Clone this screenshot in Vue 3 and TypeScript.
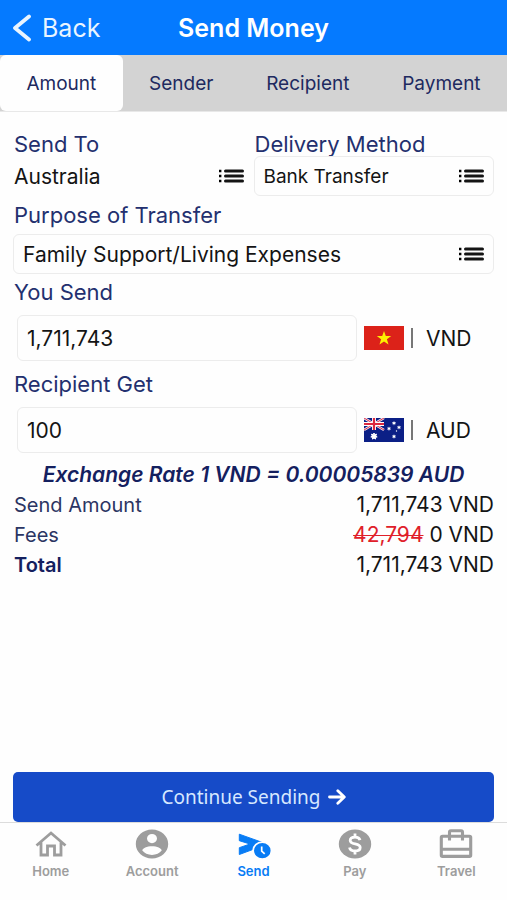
<script setup lang="ts">
import { ref } from 'vue'

interface SummaryRow {
  label: string
  amount: string
  struck?: string
  strong?: boolean
}

const tabs: string[] = ['Amount', 'Sender', 'Recipient', 'Payment']
const activeTab = ref('Amount')

const country = ref('Australia')
const delivery = ref('Bank Transfer')
const purpose = ref('Family Support/Living Expenses')
const sendAmount = ref('1,711,743')
const receiveAmount = ref('100')

const summary: SummaryRow[] = [
  { label: 'Send Amount', amount: '1,711,743 VND' },
  { label: 'Fees', amount: '0 VND', struck: '42,794' },
  { label: 'Total', amount: '1,711,743 VND', strong: true },
]

const navItems: string[] = ['Home', 'Account', 'Send', 'Pay', 'Travel']
const activeNav = ref('Send')
</script>

<template>
  <div class="screen">
    <header class="bar">
      <button type="button" class="back">
        <svg width="20" height="28" viewBox="0 0 20 28" aria-hidden="true">
          <path d="M17 2.500 3 14 17 25.500" fill="none" stroke="currentColor" stroke-width="3.800" stroke-linecap="round" stroke-linejoin="round" />
        </svg>
        <span>Back</span>
      </button>
      <h1 class="title">Send Money</h1>
    </header>

    <div class="tabs" role="tablist">
      <button
        v-for="tab in tabs"
        :key="tab"
        type="button"
        role="tab"
        class="tab"
        :class="{ active: tab === activeTab }"
        :aria-selected="tab === activeTab"
        @click="activeTab = tab"
      >{{ tab }}</button>
    </div>

    <main class="content">
      <div class="pair">
        <div class="field">
          <label class="label" for="country">Send To</label>
          <div class="picker plain">
            <select id="country" v-model="country"><option>Australia</option></select>
            <svg class="list" viewBox="0 0 26 14" aria-hidden="true">
              <path d="M1 .8h2.400v2.400H1zM1 5.800h2.400v2.400H1zM1 10.800h2.400v2.400H1z" /><path d="M7.500 2h17M7.500 7h17M7.500 12h17" stroke="currentColor" stroke-width="3" stroke-linecap="round" />
            </svg>
          </div>
        </div>
        <div class="field">
          <label class="label" for="delivery">Delivery Method</label>
          <div class="picker small">
            <select id="delivery" v-model="delivery"><option>Bank Transfer</option></select>
            <svg class="list" viewBox="0 0 26 14" aria-hidden="true">
              <path d="M1 .8h2.400v2.400H1zM1 5.800h2.400v2.400H1zM1 10.800h2.400v2.400H1z" /><path d="M7.500 2h17M7.500 7h17M7.500 12h17" stroke="currentColor" stroke-width="3" stroke-linecap="round" />
            </svg>
          </div>
        </div>
      </div>

      <div class="field spaced">
        <label class="label" for="purpose">Purpose of Transfer</label>
        <div class="picker">
          <select id="purpose" v-model="purpose"><option>Family Support/Living Expenses</option></select>
          <svg class="list" viewBox="0 0 26 14" aria-hidden="true">
            <path d="M1 .8h2.400v2.400H1zM1 5.800h2.400v2.400H1zM1 10.800h2.400v2.400H1z" /><path d="M7.500 2h17M7.500 7h17M7.500 12h17" stroke="currentColor" stroke-width="3" stroke-linecap="round" />
          </svg>
        </div>
      </div>

      <div class="field money">
        <label class="label" for="send">You Send</label>
        <div class="money-row">
          <input id="send" v-model="sendAmount" type="text" inputmode="decimal" />
          <svg class="flag" viewBox="0 0 40 24" aria-hidden="true">
            <rect width="40" height="24" fill="#dc2219" />
            <path d="M20 5l1.800 5h5.400l-4.300 3.300 1.600 5.200L20 15.400l-4.500 3.100 1.600-5.200L12.800 10h5.400z" fill="#fdf000" />
          </svg>
          <span class="divider"></span>
          <span class="currency">VND</span>
        </div>
      </div>

      <div class="field money">
        <label class="label" for="receive">Recipient Get</label>
        <div class="money-row">
          <input id="receive" v-model="receiveAmount" type="text" inputmode="decimal" />
          <svg class="flag" viewBox="0 0 40 24" aria-hidden="true">
            <rect width="40" height="24" fill="#0b1f86" />
            <path d="M0 0l20 12M20 0L0 12" stroke="#f3e6f0" stroke-width="2.600" />
            <path d="M0 0l20 12M20 0L0 12" stroke="#dc3550" stroke-width="1" />
            <path d="M10 0v12M0 6h20" stroke="#fff" stroke-width="4" />
            <path d="M10 0v12M0 6h20" stroke="#dc2840" stroke-width="2.200" />
            <path d="M10 15l.8 1.600 1.800-.4-.8 1.600 1.400 1.100-1.700.4v1.800L10 20l-1.500 1.100v-1.800l-1.700-.4 1.400-1.100-.8-1.600 1.800.4z" fill="#fff" stroke="#fff" stroke-width="1" />
            <g fill="#fff">
              <path d="M30 3l.6 1.300 1.400-.2-.9 1.100.9 1.100-1.400-.2L30 7.400l-.6-1.300-1.400.2.900-1.100-.9-1.100 1.400.2z" />
              <path d="M25 8.500l.6 1.300 1.400-.2-.9 1.100.9 1.100-1.400-.2-.6 1.300-.6-1.300-1.400.2.900-1.100-.9-1.100 1.400.2z" />
              <path d="M35 7.200l.6 1.300 1.400-.2-.9 1.100.9 1.100-1.400-.2-.6 1.300-.6-1.300-1.400.2.900-1.100-.9-1.100 1.400.2z" />
              <path d="M30 16.300l.6 1.300 1.400-.2-.9 1.100.9 1.100-1.400-.2-.6 1.300-.6-1.300-1.400.2.900-1.100-.9-1.100 1.400.2z" />
              <circle cx="32.500" cy="13" r=".7" />
            </g>
          </svg>
          <span class="divider"></span>
          <span class="currency">AUD</span>
        </div>
      </div>

      <p class="rate">Exchange Rate 1 VND = 0.00005839 AUD</p>

      <dl class="summary">
        <div v-for="row in summary" :key="row.label" class="summary-row">
          <dt :class="{ strong: row.strong }">{{ row.label }}</dt>
          <dd><s v-if="row.struck">{{ row.struck }}</s> {{ row.amount }}</dd>
        </div>
      </dl>

      <button type="button" class="continue">
        <span>Continue Sending</span>
        <svg width="18" height="16" viewBox="0 0 18 16" aria-hidden="true">
          <path d="M1.500 8h14.500M9.800 1.700 16.300 8l-6.500 6.300" fill="none" stroke="currentColor" stroke-width="2.800" stroke-linecap="round" stroke-linejoin="round" />
        </svg>
      </button>
    </main>

    <nav class="nav">
      <a
        v-for="item in navItems"
        :key="item"
        href="#"
        class="nav-item"
        :class="{ active: item === activeNav }"
        @click.prevent="activeNav = item"
      >
        <svg v-if="item === 'Home'" viewBox="0 0 34 30" aria-hidden="true">
          <path d="M2.500 16.500 17 4l14.500 12.500M7 13.500v12.500h6.500v-9h7v9H27V13.500" fill="none" stroke="currentColor" stroke-width="2.800" />
        </svg>
        <svg v-else-if="item === 'Account'" viewBox="0 0 34 30" aria-hidden="true">
          <path fill-rule="evenodd" fill="currentColor" d="M17 .5c9 0 16.200 6.500 16.200 14.500S26 29.500 17 29.500.800 23 .800 15 8 .500 17 .500zM17 5a5 4.600 0 1 0 0 9.200A5 4.600 0 0 0 17 5zm0 12.200c-5 0-9.700 2-9.700 4.400 2.100 2.700 5.600 4.300 9.700 4.300s7.600-1.600 9.700-4.300c0-2.400-4.700-4.400-9.700-4.400z" />
        </svg>
        <svg v-else-if="item === 'Send'" viewBox="0 0 34 30" aria-hidden="true">
          <path fill="currentColor" stroke="currentColor" stroke-width="1" stroke-linejoin="round" d="M2.300 5.200 25 13.300 15 20.800 2.300 25.500v-6.800L13 15 2.300 11.700z" />
          <ellipse cx="25.300" cy="21.700" rx="9.200" ry="8.500" fill="currentColor" stroke="#fefefe" stroke-width="1.800" />
          <path d="M24.700 17.500v4.600l3 2.800" fill="none" stroke="#fff" stroke-width="1.700" />
        </svg>
        <svg v-else-if="item === 'Pay'" viewBox="0 0 34 30" aria-hidden="true">
          <ellipse cx="17" cy="15" rx="16.200" ry="14.500" fill="currentColor" />
          <path d="M17 4.500v4M17 21.500v4M22 11.200c-.5-1.900-2.300-3-5-3-2.800 0-4.800 1.300-4.800 3.300 0 4.700 10 2.200 10 7 0 2.100-2.100 3.500-5.200 3.500-2.900 0-5-1.200-5.500-3.500" fill="none" stroke="#fff" stroke-width="2.800" />
        </svg>
        <svg v-else viewBox="0 0 34 30" aria-hidden="true">
          <path d="M3.500 7.200h27q1.200 0 1.200 1.200v17.800q0 1.200-1.200 1.200h-27q-1.200 0-1.200-1.200V8.400q0-1.200 1.200-1.200zM2 20.300h30M10.500 11.500V3.200q0-1.400 1.400-1.400h10.200q1.400 0 1.400 1.400v8.300" fill="none" stroke="currentColor" stroke-width="3.100" />
        </svg>
        <span>{{ item }}</span>
      </a>
    </nav>
  </div>
</template>

<style>
body {
  margin: 0;
  background: #fff;
}
</style>

<style scoped>
.screen {
  box-sizing: border-box;
  display: flex;
  flex-direction: column;
  min-height: 100vh;
  background: #fefefe;
  color: #141414;
  font-family: Inter, "Liberation Sans", sans-serif;
  font-size: 21px;
}

.screen *,
.screen *::before {
  box-sizing: border-box;
}

button,
select,
input {
  margin: 0;
  padding: 0;
  border: 0;
  background: none;
  color: inherit;
  font: inherit;
}

.bar {
  display: grid;
  grid-template-columns: 1fr auto 1fr;
  align-items: center;
  height: 55px;
  padding: 0 12px;
  background: #057aff;
  color: #fff;
}

.back {
  display: flex;
  align-items: center;
  justify-self: start;
  gap: 10px;
  font-size: 25px;
  color: #eaf5ff;
}

.title {
  margin: 0;
  font-size: 25px;
  font-weight: 600;
}

.tabs {
  display: flex;
  height: 57px;
  background: #d3d3d3;
  border-bottom: 1px solid #e8e8e8;
}

.tab {
  flex: 1 1 auto;
  border-radius: 6px;
  color: #20295f;
  font-size: 19px;
}

.tab.active {
  background: #fefefe;
}

.content {
  display: flex;
  flex: 1;
  flex-direction: column;
  padding: 20px 13px 0;
}

.pair {
  display: grid;
  grid-template-columns: 1fr 1fr;
}

.field {
  display: flex;
  flex-direction: column;
}

.label {
  padding-left: 1px;
  color: #23306f;
  font-size: 22px;
  line-height: 24px;
}

.picker {
  position: relative;
  height: 40px;
  border: 1px solid #ececec;
  border-radius: 6px;
}

.picker select {
  width: 100%;
  height: 100%;
  padding: 0 40px 0 9px;
  appearance: none;
}

.picker.plain {
  border-color: transparent;
}

.picker.plain select {
  padding-left: 0;
}

.picker.small {
  font-size: 19px;
}

.list {
  position: absolute;
  top: 12px;
  right: 9px;
  width: 26px;
  height: 14px;
  pointer-events: none;
}

.spaced {
  gap: 7px;
  margin-top: 7px;
}

.money {
  gap: 11px;
  margin-top: 6px;
}

.money + .money {
  margin-top: 11px;
}

.money-row {
  display: flex;
  align-items: center;
  padding-left: 4px;
}

.money-row input {
  flex: 1;
  min-width: 0;
  height: 46px;
  padding: 0 9px;
  border: 1px solid #ececec;
  border-radius: 6px;
}

.flag {
  width: 40px;
  height: 24px;
  margin-left: 7px;
}

.divider {
  width: 2px;
  height: 20px;
  margin-left: 7px;
  background: #777;
}

.currency {
  width: 68px;
  margin-left: 13px;
}

.rate {
  margin: 7px 0 0;
  color: #14205f;
  font-style: italic;
  font-weight: 600;
  line-height: 30px;
  text-align: center;
}

.summary {
  margin: 0;
}

.summary-row {
  display: flex;
  justify-content: space-between;
  padding-left: 1px;
  line-height: 30px;
}

dt {
  color: #2b3563;
  font-size: 20px;
}

dt.strong {
  color: #14205f;
  font-weight: 600;
}

dd {
  margin: 0;
}

s {
  color: #e0202a;
  text-decoration-thickness: 1px;
}

.continue {
  display: flex;
  align-items: center;
  justify-content: center;
  gap: 7px;
  height: 50px;
  margin-top: auto;
  border-radius: 5px;
  background: #164bc8;
  color: #fff;
  font-family: "Noto Sans", sans-serif;
  font-size: 19px;
}

.continue span {
  color: #d6e8ff;
}

.nav {
  display: flex;
  height: 78px;
  padding-top: 6px;
  border-top: 1px solid #dcdcdc;
}

.nav-item {
  display: flex;
  flex: 1;
  flex-direction: column;
  align-items: center;
  gap: 4px;
  color: #9d9d9d;
  font-size: 13px;
  font-weight: 600;
  line-height: 16px;
  text-decoration: none;
}

.nav-item svg {
  width: 34px;
  height: 30px;
}

.nav-item.active {
  color: #087cf5;
}
</style>
